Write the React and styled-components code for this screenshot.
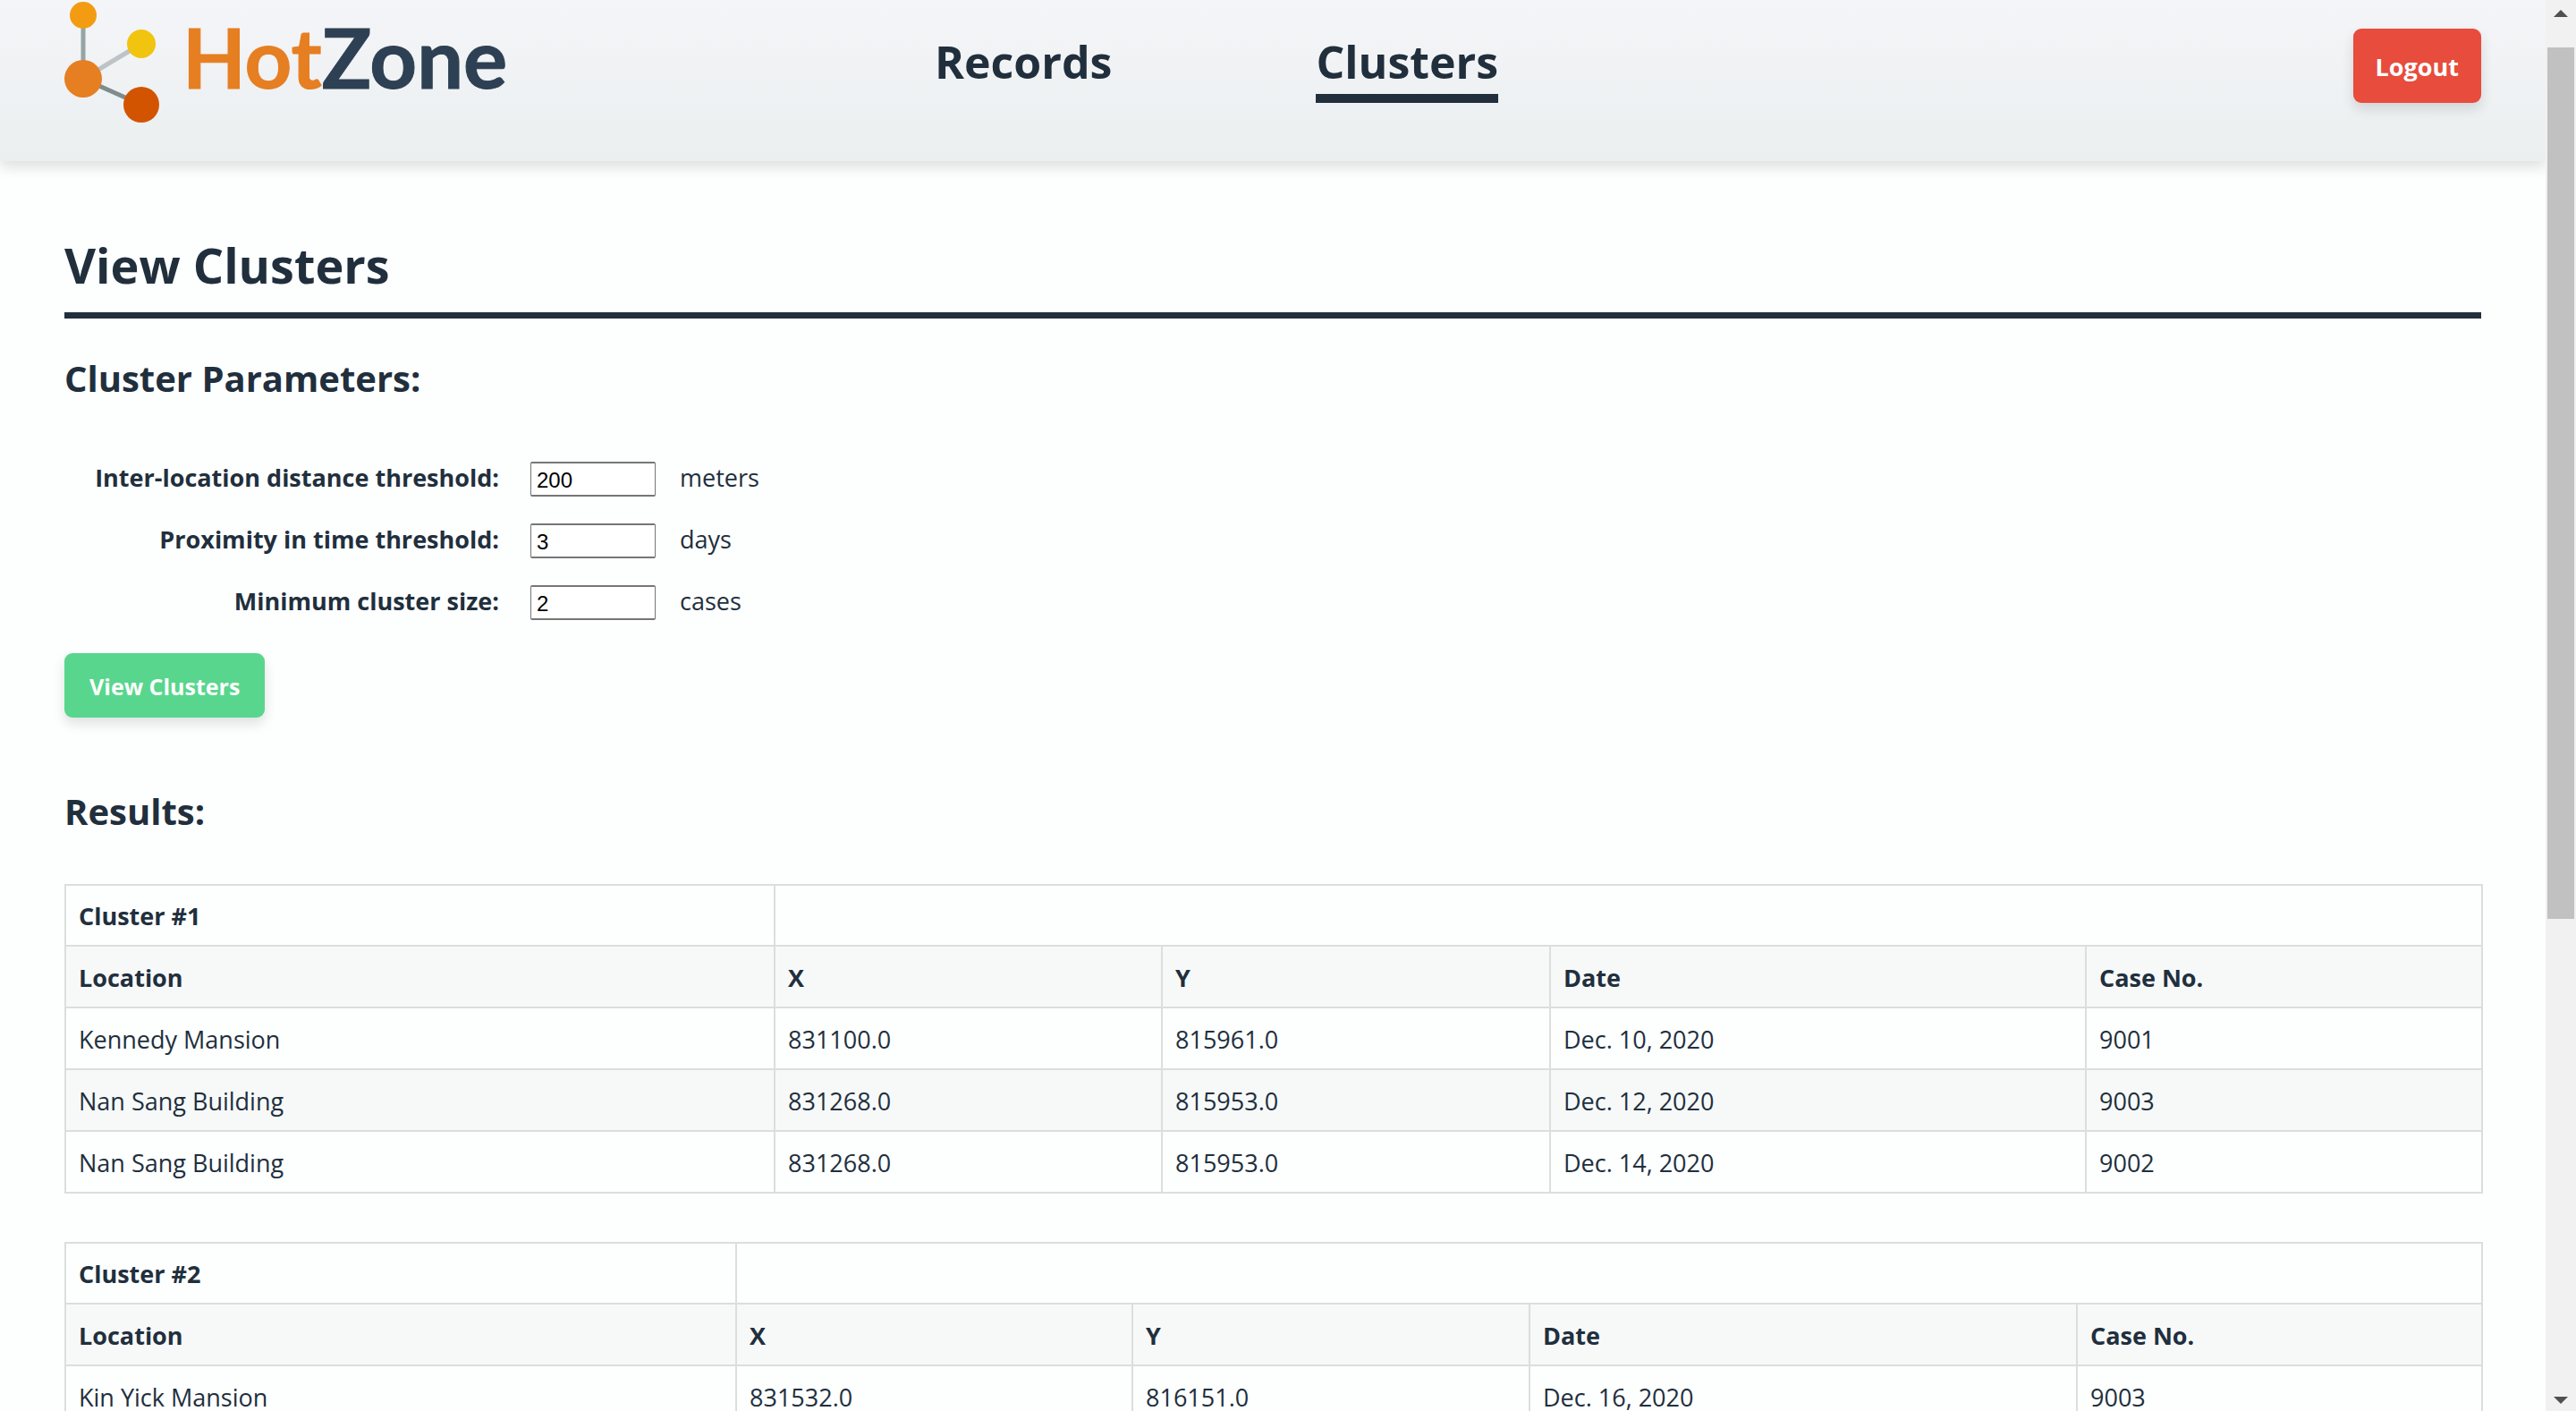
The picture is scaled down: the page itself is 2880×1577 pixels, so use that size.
import React from "react";
import styled, { createGlobalStyle } from "styled-components";

const INK = "#212f3d";
const LINE = "#dddddd";
const SANS = `"Open Sans", "Noto Sans", sans-serif`;

const GlobalStyle = createGlobalStyle`
  *, *::before, *::after { box-sizing: border-box; }
  body {
    margin: 0;
    background: #fdfefe;
    color: ${INK};
    font: 400 27px/36px ${SANS};
  }
`;

const Frame = styled.div`
  display: grid;
  grid-template-columns: minmax(0, 1fr) 34px;
  height: 100vh;
  overflow: hidden;
`;

const Page = styled.div`
  height: 100vh;
  overflow: hidden;
`;

const Header = styled.header`
  display: flex;
  align-items: flex-start;
  height: 180px;
  padding: 0 72px;
  background: linear-gradient(#f4f5f8, #ebeff0);
  box-shadow: 0 7px 14px rgba(0, 0, 0, 0.12);
`;

const Brand = styled.a`
  display: flex;
  align-items: flex-start;
  width: 496px;
  color: #2e4053;
  text-decoration: none;
`;

const BrandMark = styled.svg`
  flex: none;
  width: 108px;
  height: 140px;
`;

const BrandName = styled.span`
  margin-left: 24px;
  font: 700 92px/128px Lato, sans-serif;
  -webkit-text-stroke: 1px;
`;

const BrandAccent = styled.span`
  color: #e67e22;
`;

const Nav = styled.nav`
  display: flex;
  flex: 1;
  gap: 228px;
  padding: 34px 0 0 477px;
`;

const NavLink = styled.a`
  border-bottom: 10px solid ${(p) => (p.$active ? INK : "transparent")};
  color: ${INK};
  font-size: 50px;
  font-weight: 700;
  line-height: 71px;
  text-decoration: none;
`;

const Button = styled.button`
  flex: none;
  height: ${(p) => p.$height}px;
  margin-top: ${(p) => p.$top}px;
  padding: 2px ${(p) => p.$pad}px 0;
  border: 0;
  border-radius: 9px;
  background: ${(p) => p.$color};
  box-shadow: 0 7px 14px rgba(0, 0, 0, 0.12);
  color: #ffffff;
  font: 700 ${(p) => p.$size}px/36px ${SANS};
  white-space: nowrap;
`;

const Main = styled.main`
  padding: 80px 72px;
`;

const Title = styled.h1`
  margin: 0;
  padding-bottom: 16px;
  border-bottom: 7px solid ${INK};
  font-size: 54px;
  font-weight: 700;
  line-height: 73px;
`;

const Subtitle = styled.h2`
  margin: ${(p) => p.$top}px 0 0;
  font-size: 40px;
  font-weight: 700;
  line-height: 54px;
`;

const Fields = styled.div`
  display: grid;
  grid-template-columns: 486px 175px auto;
  grid-auto-rows: 39px;
  row-gap: 30px;
  margin-top: 66px;
`;

const Label = styled.label`
  font-weight: 700;
  text-align: right;
`;

const Field = styled.div`
  display: contents;
`;

const Input = styled.input`
  width: 140px;
  height: 39px;
  margin: 0 0 0 35px;
  padding: 4px 6px 2px;
  border: 1px solid #767676;
  border-width: 2px 1px;
  border-radius: 2px;
  background: #ffffff;
  color: #000000;
  font: 400 24px/30px "Liberation Sans", Arial, sans-serif;
`;

const Unit = styled.span`
  padding-left: 27px;
`;

const Table = styled.table`
  width: 100%;
  margin-top: 54px;
  border-collapse: collapse;
  table-layout: fixed;
`;

const Col = styled.col`
  width: ${(p) => p.$width}px;
`;

const Row = styled.tr`
  height: 69px;
  background: ${(p) => (p.$shaded ? "#f7f9f9" : "transparent")};

  &:first-child {
    height: 68px;
  }
`;

const HeadCell = styled.th`
  padding: 16px 14px 14px;
  border: 2px solid ${LINE};
  text-align: left;
`;

const Cell = styled.td`
  padding: 16px 14px 14px;
  border: 2px solid ${LINE};
`;

const Scrollbar = styled.div`
  display: flex;
  flex-direction: column;
  align-items: center;
  height: 100vh;
  background: #f1f1f1;
`;

const Arrow = styled.svg`
  flex: none;
  width: 16px;
  height: 8px;
  margin: ${(p) => (p.$down ? "auto 0 8px" : "11px 0 0")};
  fill: #505050;
`;

const Thumb = styled.div`
  width: 30px;
  height: calc(100vh - 603px);
  min-height: 40px;
  margin-top: 34px;
  background: #c1c1c1;
`;

const FIELDS = [
  { id: "distance", label: "Inter-location distance threshold:", value: "200", unit: "meters" },
  { id: "time", label: "Proximity in time threshold:", value: "3", unit: "days" },
  { id: "size", label: "Minimum cluster size:", value: "2", unit: "cases" },
];

const HEADINGS = ["Location", "X", "Y", "Date", "Case No."];

const CLUSTERS = [
  {
    name: "Cluster #1",
    widths: [793, 433, 434, 599, 443],
    rows: [
      ["Kennedy Mansion", "831100.0", "815961.0", "Dec. 10, 2020", "9001"],
      ["Nan Sang Building", "831268.0", "815953.0", "Dec. 12, 2020", "9003"],
      ["Nan Sang Building", "831268.0", "815953.0", "Dec. 14, 2020", "9002"],
    ],
  },
  {
    name: "Cluster #2",
    widths: [750, 443, 444, 612, 453],
    rows: [["Kin Yick Mansion", "831532.0", "816151.0", "Dec. 16, 2020", "9003"]],
  },
];

function Logo() {
  return (
    <Brand href="#home">
      <BrandMark viewBox="0 0 108 140" aria-hidden="true">
        <g strokeWidth="5">
          <path d="M21 17V88" stroke="#95a5a6" />
          <path d="M21 88L86 49" stroke="#bdc3c7" />
          <path d="M21 88L86 117" stroke="#7f8c8d" />
        </g>
        <circle cx="21" cy="17" r="15" fill="#f39c12" />
        <circle cx="86" cy="49" r="16" fill="#f1c40f" />
        <circle cx="21" cy="88" r="21" fill="#e67e22" />
        <circle cx="86" cy="117" r="20" fill="#d35400" />
      </BrandMark>
      <BrandName>
        <BrandAccent>Hot</BrandAccent>Zone
      </BrandName>
    </Brand>
  );
}

function ClusterTable({ cluster }) {
  return (
    <Table>
      <colgroup>
        {cluster.widths.map((w, i) => (
          <Col key={i} $width={w} />
        ))}
      </colgroup>
      <tbody>
        <Row>
          <HeadCell scope="colgroup">{cluster.name}</HeadCell>
          <Cell colSpan={4} />
        </Row>
        <Row $shaded>
          {HEADINGS.map((h) => (
            <HeadCell key={h} scope="col">
              {h}
            </HeadCell>
          ))}
        </Row>
        {cluster.rows.map((row, i) => (
          <Row key={i} $shaded={i % 2 === 1}>
            {row.map((value, j) => (
              <Cell key={j}>{value}</Cell>
            ))}
          </Row>
        ))}
      </tbody>
    </Table>
  );
}

export default function App() {
  return (
    <Frame>
      <GlobalStyle />
      <Page>
        <Header>
          <Logo />
          <Nav>
            <NavLink href="#records">Records</NavLink>
            <NavLink href="#clusters" $active>
              Clusters
            </NavLink>
          </Nav>
          <Button type="button" $color="#e74c3c" $height={83} $top={32} $pad={25} $size={27}>
            Logout
          </Button>
        </Header>
        <Main>
          <Title>View Clusters</Title>
          <Subtitle $top={40}>Cluster Parameters:</Subtitle>
          <form onSubmit={(e) => e.preventDefault()}>
            <Fields>
              {FIELDS.map((f) => (
                <Field key={f.id}>
                  <Label htmlFor={f.id}>{f.label}</Label>
                  <Input id={f.id} type="text" defaultValue={f.value} />
                  <Unit>{f.unit}</Unit>
                </Field>
              ))}
            </Fields>
            <Button type="submit" $color="#58d68d" $height={72} $top={37} $pad={28} $size={25}>
              View Clusters
            </Button>
          </form>
          <Subtitle $top={78}>Results:</Subtitle>
          {CLUSTERS.map((c) => (
            <ClusterTable key={c.name} cluster={c} />
          ))}
        </Main>
      </Page>
      <Scrollbar aria-hidden="true">
        <Arrow viewBox="0 0 16 8">
          <path d="M0 8L8 0L16 8Z" />
        </Arrow>
        <Thumb />
        <Arrow $down viewBox="0 0 16 8">
          <path d="M0 0L8 8L16 0Z" />
        </Arrow>
      </Scrollbar>
    </Frame>
  );
}
